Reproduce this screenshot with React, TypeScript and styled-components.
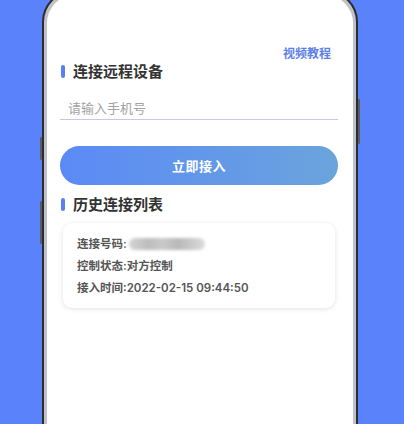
import styled, { createGlobalStyle } from "styled-components";

const GlobalStyle = createGlobalStyle`
  html, body {
    margin: 0;
    padding: 0;
    background: #5a83fb;
    overflow: hidden;
  }
  body {
    font-family: "Noto Sans CJK SC", "Noto Sans", sans-serif;
  }
`;

const Page = styled.div`
  width: 404px;
  height: 424px;
  background: #5a83fb;
  overflow: hidden;
`;

const Phone = styled.div`
  position: relative;
  margin: -10px 0 0 42px;
  width: 316px;
  height: 480px;
  box-sizing: border-box;
  border: 2px solid #2c2d31;
  border-radius: 32px;
  background: #bfc1c6;
  padding: 3px;
`;

const SideKey = styled.span<{ side: "left" | "right"; top: number; size: number }>`
  position: absolute;
  ${(p) => (p.side === "left" ? "left: -4px;" : "right: -4px;")}
  top: ${(p) => p.top}px;
  width: 2px;
  height: ${(p) => p.size}px;
  background: #5b5d63;
  border-radius: 1px;
`;

const Screen = styled.div`
  height: 100%;
  box-sizing: border-box;
  background: #ffffff;
  border-radius: 28px;
  padding: 50px 15px 0 13px;
  display: flex;
  flex-direction: column;
`;

const LinkRow = styled.div`
  display: flex;
  justify-content: flex-end;
  padding-right: 7px;
`;

const VideoLink = styled.a`
  font-size: 12px;
  line-height: 16px;
  font-weight: 700;
  color: #5d80e6;
  text-decoration: none;
`;

const SectionTitle = styled.div<{ gap: number }>`
  display: flex;
  align-items: center;
  gap: 8px;
  margin-top: ${(p) => p.gap}px;
  font-size: 15px;
  line-height: 20px;
  font-weight: 700;
  color: #333333;

  &::before {
    content: "";
    margin-left: 1px;
    width: 4px;
    height: 13px;
    border-radius: 2px;
    background: #5b7ff2;
  }
`;

const PhoneInput = styled.input`
  margin-top: 14px;
  height: 24px;
  padding: 0 8px;
  border: none;
  border-bottom: 1px solid #c9c6ec;
  outline: none;
  font-family: inherit;
  font-size: 13px;
  color: #333;
  background: transparent;

  &::placeholder {
    color: #a3a3a3;
  }
`;

const ConnectButton = styled.button`
  margin-top: 26px;
  height: 39px;
  border: none;
  border-radius: 20px;
  background: linear-gradient(90deg, #5b8af6 0%, #6aa4dc 100%);
  color: #ffffff;
  font-family: inherit;
  font-size: 13px;
  font-weight: 700;
  letter-spacing: 0.5px;
`;

const Card = styled.div`
  margin: 9px 3px 0 3px;
  padding: 10px 14px 9px;
  border-radius: 9px;
  background: #ffffff;
  box-shadow: 0 1px 5px rgba(0, 0, 0, 0.12);
`;

const InfoRow = styled.div`
  display: flex;
  align-items: center;
  font-family: Inter, "Noto Sans CJK SC", sans-serif;
  font-size: 11.5px;
  line-height: 22px;
  font-weight: 600;
  color: #555555;
`;

const Blurred = styled.span`
  display: inline-block;
  width: 76px;
  height: 12px;
  margin-left: 2px;
  border-radius: 6px;
  background: linear-gradient(
    90deg,
    #d4d4d4 0%,
    #bdbdbd 25%,
    #c9c9c9 45%,
    #b8b8b8 65%,
    #dddddd 100%
  );
  filter: blur(1.5px);
`;

export default function App() {
  return (
    <Page>
      <GlobalStyle />
      <Phone>
        <SideKey side="left" top={145} size={23} />
        <SideKey side="left" top={209} size={43} />
        <SideKey side="right" top={107} size={45} />
        <Screen>
          <LinkRow>
            <VideoLink href="#">视频教程</VideoLink>
          </LinkRow>
          <SectionTitle gap={0}>连接远程设备</SectionTitle>
          <PhoneInput placeholder="请输入手机号" />
          <ConnectButton>立即接入</ConnectButton>
          <SectionTitle gap={9}>历史连接列表</SectionTitle>
          <Card>
            <InfoRow>
              连接号码:
              <Blurred />
            </InfoRow>
            <InfoRow>控制状态:对方控制</InfoRow>
            <InfoRow>接入时间:2022-02-15 09:44:50</InfoRow>
          </Card>
        </Screen>
      </Phone>
    </Page>
  );
}
